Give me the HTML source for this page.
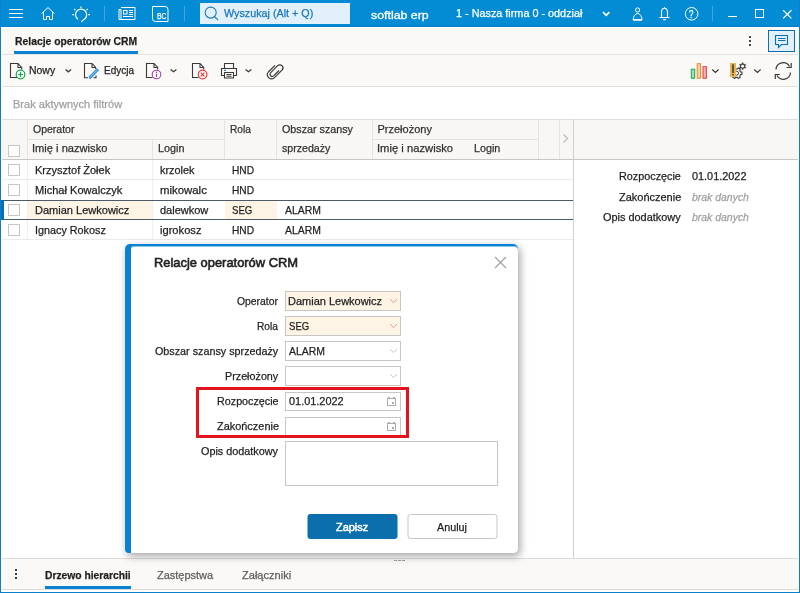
<!DOCTYPE html>
<html><head><meta charset="utf-8"><title>Relacje operatorów CRM</title>
<style>
*{box-sizing:border-box;margin:0;padding:0}
html,body{width:800px;height:593px;overflow:hidden;background:#fff}
body{font-family:"Liberation Sans",sans-serif;font-size:12px;color:#201f1e;position:relative}
.a{position:absolute}
.t{position:absolute;white-space:nowrap;transform-origin:0 0}
svg{position:absolute;overflow:visible}
#top{left:0;top:0;width:800px;height:27px;background:#038bd3;border-bottom:1px solid #0a7cc8}
#frame{left:0;top:0;width:800px;height:593px;border:1px solid #0a7fcc;border-top:none;z-index:50}
#tabrow{left:2px;top:28px;width:796px;height:27px;background:#faf9f8;border-bottom:1px solid #e4e2e0}
#toolbar{left:2px;top:55px;width:796px;height:32px;background:#faf9f8;border-bottom:1px solid #e1dfdd}
#hdr{left:2px;top:119px;width:572px;height:41px;background:#f8f7f6;border-top:1px solid #e1dfdd;border-bottom:1px solid #c8c6c4}
#rhdr{left:573px;top:119px;width:225px;height:41px;background:#f8f7f6;border-top:1px solid #e1dfdd;border-bottom:1px solid #c8c6c4;border-left:1px solid #d2d0ce}
#rpanel{left:573px;top:160px;width:225px;height:398px;border-left:1px solid #d2d0ce}
#bottom{left:2px;top:558px;width:796px;height:32px;background:#faf9f8;border-top:1px solid #dddbd9;border-bottom:1px solid #dddbd9}
.vl{position:absolute;width:1px;background:#e5e3e1}
.hl{position:absolute;height:1px;background:#e5e3e1}
.cb{position:absolute;left:8px;width:12px;height:12px;border:1px solid #c8c6c4;background:#fff}
#dlg{left:125px;top:244px;width:393px;height:309px;background:#0a82d2;border-radius:5px 5px 4px 4px;box-shadow:2px 3px 8px rgba(0,0,0,.37);z-index:10}
#dlgin{left:131px;top:246px;width:387px;height:307px;background:#fff;border-radius:3px 4px 4px 0;border-top:1px solid #8cc4ea;z-index:10}
.inp{position:absolute;left:285px;width:116px;height:20px;border:1px solid #c8c6c4;background:#fff;z-index:11}
.or{background:#fdf4e6}
.btn{position:absolute;top:514px;width:90px;height:25px;border-radius:3px;z-index:11;transform:translateX(.5px)}
.z{z-index:12}
</style></head><body>
<div class="a" id="top"></div>
<div class="a" style="left:200px;top:3px;width:150px;height:21px;background:#e1f0fa"></div>
<div class="a" style="left:712px;top:6px;width:1px;height:15px;background:#3fa5e0"></div>
<div class="a" style="left:104px;top:6px;width:1px;height:15px;background:#3fa5e0"></div>
<div class="a" style="left:184px;top:6px;width:1px;height:15px;background:#3fa5e0"></div>
<div class="a" id="tabrow"></div>
<div class="a" style="left:14px;top:51px;width:124px;height:3px;background:#0a82d2"></div>
<div class="a" style="left:768px;top:30px;width:27px;height:22px;background:#e1f0fa;border:1px solid #0b6fb0"></div>
<div class="a" id="toolbar"></div>
<div class="hl" style="left:2px;top:119px;width:796px"></div>
<div class="a" id="hdr"></div>
<div class="a" id="rhdr"></div>
<div class="a" id="rpanel"></div>
<!-- header grid lines -->
<div class="vl" style="left:27px;top:120px;height:39px"></div>
<div class="vl" style="left:27px;top:160px;height:80px;background:#f1f0ef"></div>
<div class="vl" style="left:152px;top:139px;height:20px"></div>
<div class="vl" style="left:152px;top:160px;height:80px;background:#f1f0ef"></div>
<div class="vl" style="left:224px;top:120px;height:39px"></div>
<div class="vl" style="left:276px;top:120px;height:39px"></div>
<div class="vl" style="left:372px;top:120px;height:39px"></div>
<div class="vl" style="left:538px;top:120px;height:39px"></div>
<div class="vl" style="left:559px;top:120px;height:39px"></div>
<div class="hl" style="left:28px;top:139px;width:196px"></div>
<div class="hl" style="left:373px;top:139px;width:165px"></div>
<!-- rows -->
<div class="hl" style="left:2px;top:179px;width:571px;background:#edebe9"></div>
<div class="hl" style="left:2px;top:239px;width:571px;background:#edebe9"></div>
<div class="a" style="left:28px;top:201px;width:124px;height:18px;background:#fdf4e6"></div>
<div class="a" style="left:225px;top:201px;width:52px;height:18px;background:#fdf4e6"></div>
<div class="a" style="left:1px;top:200px;width:572px;height:1px;background:#4c5a66"></div>
<div class="a" style="left:1px;top:219px;width:572px;height:1px;background:#4c5a66"></div>
<div class="a" style="left:1px;top:200px;width:3px;height:20px;background:#0a6fb4"></div>
<div class="cb" style="top:145px"></div>
<div class="cb" style="top:164px"></div>
<div class="cb" style="top:184px"></div>
<div class="cb" style="top:204px"></div>
<div class="cb" style="top:224px"></div>
<!-- bottom -->
<div class="a" id="bottom"></div>
<div class="a" style="left:45px;top:586px;width:86px;height:3px;background:#0a82d2"></div>
<div class="a" style="left:15px;top:569px;width:2px;height:2px;background:#3b3a39;box-shadow:0 4px 0 #3b3a39,0 8px 0 #3b3a39"></div>
<div class="a" style="left:749px;top:36px;width:2px;height:2px;background:#484644;box-shadow:0 4px 0 #484644,0 8px 0 #484644"></div>
<div class="a" style="left:394px;top:560px;width:3px;height:1px;background:#a19f9d;box-shadow:4px 0 0 #a19f9d,8px 0 0 #a19f9d"></div>
<!-- dialog -->
<div class="a" id="dlg"></div>
<div class="a" id="dlgin"></div>
<div class="inp or" style="top:291px"></div>
<div class="inp or" style="top:316px"></div>
<div class="inp" style="top:341px"></div>
<div class="inp" style="top:366px"></div>
<div class="inp" style="top:392px;height:19px"></div>
<div class="inp" style="top:417px;height:19px"></div>
<div class="inp" style="top:441px;width:213px;height:45px"></div>
<div class="a z" style="left:196px;top:387px;width:213px;height:51px;border:3px solid #e5131d"></div>
<div class="btn" style="left:307px;background:#0b6fae"></div>
<div class="btn" style="left:407px;background:#fff;border:1px solid #c8c6c4"></div>
<svg class="a" style="left:0;top:0;z-index:15" width="800" height="593" viewBox="0 0 800 593" fill="none" stroke-linecap="butt">
<!-- top bar icons (white) -->
<g stroke="#fff" stroke-width="1">
<path d="M9 9.5H23M9 13.5H23M9 17.5H23"/>
<path d="M41.5 13.6L48 7.6L54.5 13.6M43.5 12V19.5H46.5V16.5H49.5V19.5H52.5V12"/>
<path d="M78 19.3A5.6 5.6 0 1 1 84.6 19Q82.4 20.2 81.4 22" stroke-width="1.25"/>
<path d="M81 6.5V8M74.2 9L75.4 10.2M87.8 9L86.6 10.2M72.3 14.6H74M88.2 14.6H89.9" stroke-width="1.2"/>
<path d="M121 7.5H135V19.5H119V9.5H121V19"/>
<rect x="123.5" y="10.5" width="3.5" height="3.5"/>
<path d="M129 10.5H133M129 12.5H133M129 14.5H133M123 16.5H133"/>
<path d="M152.5 6.5H165A3 3 0 0 1 168 9.5V21.5H155.5A3 3 0 0 1 152.5 18.5Z"/>
<circle cx="637.6" cy="10" r="2.1"/>
<path d="M633.2 20A4.4 6.5 0 0 1 642 20Z"/>
<path d="M633 19.8H642.2" stroke-width="1.4"/>
<path d="M659.5 17.5H669.5M661.5 17.5V12.5A3 4.2 0 0 1 667.5 12.5V17.5M664.5 8.3V7M663.3 19.6H665.7" stroke-width="1.1"/>
<circle cx="691.6" cy="13.8" r="6.3"/>
<path d="M728 16.5H737"/>
<rect x="755.5" y="9.5" width="8" height="8"/>
<path d="M783.2 10.2L791.4 18.4M791.4 10.2L783.2 18.4" stroke-width="1.25"/>
<path d="M603 12.2L606.2 15.3L609.4 12.2" stroke-width="1.7"/>
</g>
<!-- search magnifier -->
<g stroke="#1b7cbc" stroke-width="1.1"><circle cx="210.7" cy="12.6" r="5.5"/><path d="M214.6 16.6L218 20"/></g>
<!-- chat icon -->
<path d="M775.5 35.5H787.5V44.5H781.5L778.5 47.5V44.5H775.5Z M778 38.5H785.5M778 40.5H785.5" stroke="#0a6fb4" stroke-width="1.1"/>
<!-- toolbar doc icons -->
<g stroke="#3b3a39" stroke-width="1.1">
<path d="M17 77.5H10.5V63.5H18L21.7 67.5V69.5M18 63.5V67.5H21.7"/>
<path d="M88 77.8H84.5V63.5H92L95.7 67.5V69M92 63.5V67.5H95.7M93.5 77.8H96V75.5"/>
<path d="M152.5 77.5H146.5V63.5H154L157.7 67.5V69.5M154 63.5V67.5H157.7"/>
<path d="M198.5 77.5H192.5V63.5H200L203.7 67.5V69.5M200 63.5V67.5H203.7"/>
<!-- printer -->
<path d="M224.5 68V63.5H233.5V68M224.5 75.5H221.5V68.5H236.5V75.5H233.5M224.5 72.5H233.5V78H224.5ZM226.5 74.5H231.5M226.5 76.3H231.5"/>
<!-- chevrons -->
<path d="M65.5 69.6L68.3 71.8L71.1 69.6M170.6 69.6L173.5 71.8L176.4 69.6M245.6 69.6L248.5 71.8L251.4 69.6" stroke-width="1.3"/>
<path d="M712.2 69.5L715.4 72.5L718.6 69.5M754.2 69.5L757.4 72.5L760.6 69.5" stroke-width="1.15"/>
<!-- paperclip -->
<path d="M279 70.5L273.6 75.9A2.2 2.2 0 0 1 270.5 72.8L277.6 65.7A3.1 3.1 0 0 1 282 70.1L274.2 77.9A4.2 4.2 0 0 1 268.3 72L275 65.3" stroke-width="1.2"/>
<!-- refresh -->
<path d="M776 69.5A7.2 7.2 0 0 1 789.5 66.5M790.5 72.5A7.2 7.2 0 0 1 777 75.5M791.2 63V67.5H786.7M775.3 79V74.5H779.8" stroke-width="1.2"/>
</g>
<path d="M224 70.3H226" stroke="#1b8ae0" stroke-width="1.2"/>
<!-- pencil -->
<path d="M98 69.2L89.6 77.9" stroke="#2b8fd8" stroke-width="3"/>
<path d="M89.9 76.2L88.6 78.9L91.4 77.8Z" fill="#2b8fd8" stroke="none"/>
<path d="M97.4 69.8L90.2 77.2" stroke="#bfe0f6" stroke-width=".8"/>
<!-- circles -->
<circle cx="20.5" cy="74.5" r="4.3" fill="#fff" stroke="#1aa84c" stroke-width="1.2"/>
<path d="M18 74.5H23M20.5 72V77" stroke="#1aa84c" stroke-width="1.2"/>
<circle cx="156.5" cy="74.5" r="4.3" fill="#fff" stroke="#a040b0" stroke-width="1.1"/>
<path d="M156.5 73.8V77M156.5 71.8V73" stroke="#a040b0" stroke-width="1.2"/>
<circle cx="202.6" cy="74.5" r="4.3" fill="#fff" stroke="#e83a3a" stroke-width="1.2"/>
<path d="M200.8 72.7L204.4 76.3M204.4 72.7L200.8 76.3" stroke="#e83a3a" stroke-width="1.2"/>
<!-- bars -->
<rect x="691.3" y="69.2" width="3.4" height="9" fill="#a6dcb4" stroke="#1aa84c" stroke-width="1"/>
<rect x="697.2" y="63.7" width="3.4" height="14.5" fill="#f7cfa0" stroke="#ec8a2a" stroke-width="1"/>
<rect x="703" y="66.7" width="3.4" height="11.5" fill="#f5b0b0" stroke="#e83a3a" stroke-width="1"/>
<!-- gear with exclamation -->
<path d="M740.59 71.87L741.98 72.04L741.98 74.36L740.59 74.53L739.70 76.08L740.25 77.36L738.23 78.53L737.39 77.41L735.61 77.41L734.77 78.53L732.75 77.36L733.30 76.08L732.41 74.53L731.02 74.36L731.02 72.04L732.41 71.87L733.30 70.32L732.75 69.04L734.77 67.87L735.61 68.99L737.39 68.99L738.23 67.87L740.25 69.04L739.70 70.32Z" stroke="#3b3a39" stroke-width="1.1" fill="#faf9f8" stroke-linejoin="round"/><circle cx="736.5" cy="73.2" r="2" stroke="#3b3a39" stroke-width="1" fill="#faf9f8"/>
<path d="M743.32 68.59L743.33 69.62L741.87 69.62L741.88 68.59L740.89 68.02L740.00 68.54L739.27 67.28L740.17 66.77L740.17 65.63L739.27 65.12L740.00 63.86L740.89 64.38L741.88 63.81L741.87 62.78L743.33 62.78L743.32 63.81L744.31 64.38L745.20 63.86L745.93 65.12L745.03 65.63L745.03 66.77L745.93 67.28L745.20 68.54L744.31 68.02Z" fill="#3b3a39" stroke="#3b3a39" stroke-width=".2" stroke-linejoin="round"/><circle cx="742.6" cy="66.2" r="1.45" fill="#faf9f8"/>
<rect x="730" y="63" width="6" height="14" fill="#e9b64e"/>
<path d="M733 64.3V73M733 74V75.6" stroke="#3a3f4a" stroke-width="1.6"/>
<!-- header chevron -->
<path d="M563.5 134.5L567.5 138.5L563.5 142.5" stroke="#bebcba" stroke-width="1.2"/>
<!-- dialog -->
<path d="M495 257L506 268M506 257L495 268" stroke="#a6a4a2" stroke-width="1.3"/>
<path d="M390 299.2L393.5 302.6L397 299.2M390 324.2L393.5 327.6L397 324.2" stroke="#dba090" stroke-width="1"/>
<path d="M390 349.2L393.5 352.6L397 349.2M390 374.2L393.5 377.6L397 374.2" stroke="#c8c6c4" stroke-width="1"/>
<g stroke="#aeacaa" stroke-width="1">
<rect x="387.5" y="398.5" width="8" height="7"/><path d="M388 397.5H390M393 397.5H395"/><rect x="392" y="402" width="2" height="2" fill="#aeacaa" stroke="none"/>
<rect x="387.5" y="423.5" width="8" height="7"/><path d="M388 422.5H390M393 422.5H395"/><rect x="392" y="427" width="2" height="2" fill="#aeacaa" stroke="none"/>
</g>
</svg>

<div class="a" id="tx" style="left:0;top:0;width:800px;height:593px;will-change:transform;z-index:20">
<span class="t" style="font-size:11px;color:#1877b8;-webkit-text-stroke:0.25px #1877b8;left:224.00px;top:7.00px;line-height:12px;height:12px;transform:scaleX(0.9780);">Wyszukaj (Alt + Q)</span>
<span class="t" style="font-size:11.5px;color:#fff;-webkit-text-stroke:0.3px #fff;left:371.00px;top:9.00px;line-height:12px;height:12px;transform:scaleX(1.0741);">softlab erp</span>
<span class="t" style="font-size:11px;color:#fff;-webkit-text-stroke:0.25px #fff;left:456.00px;top:7.00px;line-height:12px;height:12px;transform:scaleX(0.9845);">1 - Nasza firma 0 - oddział</span>
<span class="t" style="font-size:9px;color:#fff;-webkit-text-stroke:0.25px #fff;left:156.80px;top:11.00px;line-height:10px;height:10px;transform:scaleX(0.7538);">BC</span>
<span class="t" style="font-size:10px;color:#fff;-webkit-text-stroke:0.25px #fff;left:689.20px;top:9.00px;line-height:11px;height:11px;transform:scaleX(0.8000);">?</span>
<span class="t" style="font-size:11px;color:#201f1e;font-weight:bold;-webkit-text-stroke:0.25px #201f1e;left:15.00px;top:35.00px;line-height:12px;height:12px;transform:scaleX(0.9423);">Relacje operatorów CRM</span>
<span class="t" style="font-size:11px;color:#201f1e;-webkit-text-stroke:0.25px #201f1e;left:29.40px;top:64.00px;line-height:12px;height:12px;transform:scaleX(0.9500);">Nowy</span>
<span class="t" style="font-size:11px;color:#201f1e;-webkit-text-stroke:0.25px #201f1e;left:103.70px;top:64.00px;line-height:12px;height:12px;transform:scaleX(0.9088);">Edycja</span>
<span class="t" style="font-size:11px;color:#a19f9d;-webkit-text-stroke:0.25px #a19f9d;left:13.00px;top:98.00px;line-height:12px;height:12px;transform:scaleX(1.0028);">Brak aktywnych filtrów</span>
<span class="t" style="font-size:11px;color:#323130;-webkit-text-stroke:0.25px #323130;left:32.50px;top:123.00px;line-height:12px;height:12px;transform:scaleX(0.9545);">Operator</span>
<span class="t" style="font-size:11px;color:#323130;-webkit-text-stroke:0.25px #323130;left:32.19px;top:142.00px;line-height:12px;height:12px;transform:scaleX(1.0108);">Imię i nazwisko</span>
<span class="t" style="font-size:11px;color:#323130;-webkit-text-stroke:0.25px #323130;left:157.50px;top:142.00px;line-height:12px;height:12px;transform:scaleX(0.9815);">Login</span>
<span class="t" style="font-size:11px;color:#323130;-webkit-text-stroke:0.25px #323130;left:229.50px;top:123.00px;line-height:12px;height:12px;transform:scaleX(0.9239);">Rola</span>
<span class="t" style="font-size:11px;color:#323130;-webkit-text-stroke:0.25px #323130;left:281.80px;top:123.00px;line-height:12px;height:12px;transform:scaleX(0.9753);">Obszar szansy</span>
<span class="t" style="font-size:11px;color:#323130;-webkit-text-stroke:0.25px #323130;left:281.80px;top:142.00px;line-height:12px;height:12px;transform:scaleX(0.9647);">sprzedaży</span>
<span class="t" style="font-size:11px;color:#323130;-webkit-text-stroke:0.25px #323130;left:377.50px;top:123.00px;line-height:12px;height:12px;transform:scaleX(1.0000);">Przełożony</span>
<span class="t" style="font-size:11px;color:#323130;-webkit-text-stroke:0.25px #323130;left:376.98px;top:142.00px;line-height:12px;height:12px;transform:scaleX(1.0203);">Imię i nazwisko</span>
<span class="t" style="font-size:11px;color:#323130;-webkit-text-stroke:0.25px #323130;left:474.20px;top:142.00px;line-height:12px;height:12px;transform:scaleX(0.9778);">Login</span>
<span class="t" style="font-size:11px;color:#201f1e;-webkit-text-stroke:0.25px #201f1e;left:35.00px;top:164.00px;line-height:12px;height:12px;transform:scaleX(1.0000);">Krzysztof Żołek</span>
<span class="t" style="font-size:11px;color:#201f1e;-webkit-text-stroke:0.25px #201f1e;left:160.00px;top:164.00px;line-height:12px;height:12px;transform:scaleX(0.9886);">krzolek</span>
<span class="t" style="font-size:11px;color:#201f1e;-webkit-text-stroke:0.25px #201f1e;left:232.40px;top:164.00px;line-height:12px;height:12px;transform:scaleX(0.9250);">HND</span>
<span class="t" style="font-size:11px;color:#201f1e;-webkit-text-stroke:0.25px #201f1e;left:35.00px;top:184.00px;line-height:12px;height:12px;transform:scaleX(1.0057);">Michał Kowalczyk</span>
<span class="t" style="font-size:11px;color:#201f1e;-webkit-text-stroke:0.25px #201f1e;left:160.00px;top:184.00px;line-height:12px;height:12px;transform:scaleX(1.0356);">mikowalc</span>
<span class="t" style="font-size:11px;color:#201f1e;-webkit-text-stroke:0.25px #201f1e;left:232.40px;top:184.00px;line-height:12px;height:12px;transform:scaleX(0.9250);">HND</span>
<span class="t" style="font-size:11px;color:#201f1e;-webkit-text-stroke:0.25px #201f1e;left:35.00px;top:204.00px;line-height:12px;height:12px;transform:scaleX(1.0021);">Damian Lewkowicz</span>
<span class="t" style="font-size:11px;color:#201f1e;-webkit-text-stroke:0.25px #201f1e;left:160.00px;top:204.00px;line-height:12px;height:12px;transform:scaleX(1.0000);">dalewkow</span>
<span class="t" style="font-size:11px;color:#201f1e;-webkit-text-stroke:0.25px #201f1e;left:232.40px;top:204.00px;line-height:12px;height:12px;transform:scaleX(0.8739);">SEG</span>
<span class="t" style="font-size:11px;color:#201f1e;-webkit-text-stroke:0.25px #201f1e;left:284.60px;top:204.00px;line-height:12px;height:12px;transform:scaleX(0.9474);">ALARM</span>
<span class="t" style="font-size:11px;color:#201f1e;-webkit-text-stroke:0.25px #201f1e;left:34.82px;top:224.00px;line-height:12px;height:12px;transform:scaleX(0.9817);">Ignacy Rokosz</span>
<span class="t" style="font-size:11px;color:#201f1e;-webkit-text-stroke:0.25px #201f1e;left:160.00px;top:224.00px;line-height:12px;height:12px;transform:scaleX(1.0122);">igrokosz</span>
<span class="t" style="font-size:11px;color:#201f1e;-webkit-text-stroke:0.25px #201f1e;left:232.40px;top:224.00px;line-height:12px;height:12px;transform:scaleX(0.9250);">HND</span>
<span class="t" style="font-size:11px;color:#201f1e;-webkit-text-stroke:0.25px #201f1e;left:284.60px;top:224.00px;line-height:12px;height:12px;transform:scaleX(0.9474);">ALARM</span>
<span class="t" style="font-size:11px;color:#201f1e;-webkit-text-stroke:0.25px #201f1e;left:619.30px;top:170.00px;line-height:12px;height:12px;transform:scaleX(0.9825);">Rozpoczęcie</span>
<span class="t" style="font-size:11px;color:#201f1e;-webkit-text-stroke:0.25px #201f1e;left:692.00px;top:170.00px;line-height:12px;height:12px;transform:scaleX(0.9891);">01.01.2022</span>
<span class="t" style="font-size:11px;color:#201f1e;-webkit-text-stroke:0.25px #201f1e;left:619.30px;top:191.00px;line-height:12px;height:12px;transform:scaleX(0.9984);">Zakończenie</span>
<span class="t" style="font-size:11px;color:#a19f9d;font-style:italic;-webkit-text-stroke:0.25px #a19f9d;left:692.00px;top:191.00px;line-height:12px;height:12px;transform:scaleX(0.9500);">brak danych</span>
<span class="t" style="font-size:11px;color:#201f1e;-webkit-text-stroke:0.25px #201f1e;left:602.80px;top:211.00px;line-height:12px;height:12px;transform:scaleX(0.9924);">Opis dodatkowy</span>
<span class="t" style="font-size:11px;color:#a19f9d;font-style:italic;-webkit-text-stroke:0.25px #a19f9d;left:692.00px;top:211.00px;line-height:12px;height:12px;transform:scaleX(0.9500);">brak danych</span>
<span class="t" style="font-size:13px;color:#201f1e;-webkit-text-stroke:0.6px #201f1e;left:153.50px;top:255.00px;line-height:15px;height:15px;transform:scaleX(0.9917);z-index:20;">Relacje operatorów CRM</span>
<span class="t" style="font-size:11px;color:#201f1e;-webkit-text-stroke:0.25px #201f1e;left:236.80px;top:295.00px;line-height:12px;height:12px;transform:scaleX(0.9432);z-index:20;">Operator</span>
<span class="t" style="font-size:11px;color:#201f1e;-webkit-text-stroke:0.25px #201f1e;left:257.00px;top:320.00px;line-height:12px;height:12px;transform:scaleX(0.9261);z-index:20;">Rola</span>
<span class="t" style="font-size:11px;color:#201f1e;-webkit-text-stroke:0.25px #201f1e;left:155.00px;top:345.00px;line-height:12px;height:12px;transform:scaleX(0.9786);z-index:20;">Obszar szansy sprzedaży</span>
<span class="t" style="font-size:11px;color:#201f1e;-webkit-text-stroke:0.25px #201f1e;left:224.50px;top:370.00px;line-height:12px;height:12px;transform:scaleX(0.9782);z-index:20;">Przełożony</span>
<span class="t" style="font-size:11px;color:#201f1e;-webkit-text-stroke:0.25px #201f1e;left:216.70px;top:395.00px;line-height:12px;height:12px;transform:scaleX(0.9778);z-index:20;">Rozpoczęcie</span>
<span class="t" style="font-size:11px;color:#201f1e;-webkit-text-stroke:0.25px #201f1e;left:216.70px;top:420.00px;line-height:12px;height:12px;transform:scaleX(0.9935);z-index:20;">Zakończenie</span>
<span class="t" style="font-size:11px;color:#201f1e;-webkit-text-stroke:0.25px #201f1e;left:200.60px;top:445.00px;line-height:12px;height:12px;transform:scaleX(0.9835);z-index:20;">Opis dodatkowy</span>
<span class="t" style="font-size:11px;color:#201f1e;-webkit-text-stroke:0.25px #201f1e;left:287.80px;top:295.00px;line-height:12px;height:12px;transform:scaleX(0.9989);z-index:20;">Damian Lewkowicz</span>
<span class="t" style="font-size:11px;color:#201f1e;-webkit-text-stroke:0.25px #201f1e;left:288.50px;top:320.00px;line-height:12px;height:12px;transform:scaleX(0.8696);z-index:20;">SEG</span>
<span class="t" style="font-size:11px;color:#201f1e;-webkit-text-stroke:0.25px #201f1e;left:288.50px;top:345.00px;line-height:12px;height:12px;transform:scaleX(0.9474);z-index:20;">ALARM</span>
<span class="t" style="font-size:11px;color:#201f1e;-webkit-text-stroke:0.25px #201f1e;left:288.60px;top:395.00px;line-height:12px;height:12px;transform:scaleX(0.9927);z-index:20;">01.01.2022</span>
<span class="t" style="font-size:11px;color:#fff;-webkit-text-stroke:0.5px #fff;left:336.25px;top:521.00px;line-height:12px;height:12px;transform:scaleX(0.9924);z-index:20;">Zapisz</span>
<span class="t" style="font-size:11px;color:#201f1e;-webkit-text-stroke:0.25px #201f1e;left:437.20px;top:521.00px;line-height:12px;height:12px;transform:scaleX(0.9774);z-index:20;">Anuluj</span>
<span class="t" style="font-size:11px;color:#201f1e;font-weight:bold;-webkit-text-stroke:0.25px #201f1e;left:44.80px;top:569.00px;line-height:12px;height:12px;transform:scaleX(0.9348);">Drzewo hierarchii</span>
<span class="t" style="font-size:11px;color:#605e5c;-webkit-text-stroke:0.25px #605e5c;left:157.20px;top:569.00px;line-height:12px;height:12px;transform:scaleX(0.9965);">Zastępstwa</span>
<span class="t" style="font-size:11px;color:#605e5c;-webkit-text-stroke:0.25px #605e5c;left:242.00px;top:569.00px;line-height:12px;height:12px;transform:scaleX(1.0041);">Załączniki</span>
</div>
<div class="a" id="frame"></div>
</body></html>
